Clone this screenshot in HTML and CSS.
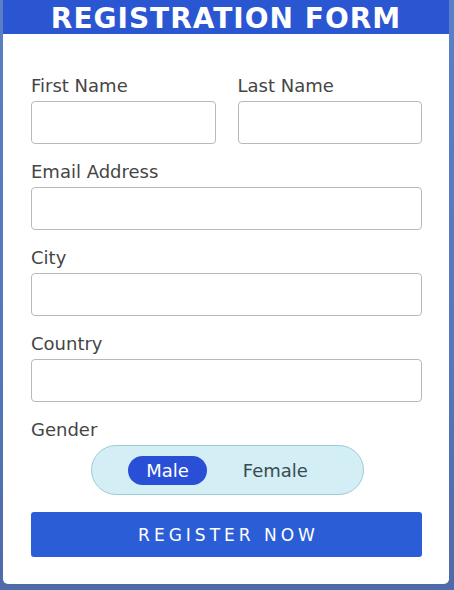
FILE: index.html
```html
<!DOCTYPE html>
<html lang="en">
<head>
<meta charset="utf-8">
<title>Registration Form</title>
<link rel="stylesheet" href="styles.css">
</head>
<body>
<div class="card">
  <h1 class="title">REGISTRATION FORM</h1>
  <form class="form">
    <div class="row">
      <div class="field">
        <label class="label">First Name</label>
        <input class="input" type="text">
      </div>
      <div class="field">
        <label class="label">Last Name</label>
        <input class="input" type="text">
      </div>
    </div>
    <div class="field">
      <label class="label">Email Address</label>
      <input class="input" type="text">
    </div>
    <div class="field">
      <label class="label">City</label>
      <input class="input" type="text">
    </div>
    <div class="field">
      <label class="label">Country</label>
      <input class="input" type="text">
    </div>
    <div class="gender">
      <span class="label">Gender</span>
      <div class="toggle">
        <span class="option active">Male</span>
        <span class="option">Female</span>
      </div>
    </div>
    <button class="submit" type="button">REGISTER NOW</button>
  </form>
</div>
</body>
</html>
```

FILE: styles.css
```css
html, body {
  margin: 0;
  padding: 0;
}
body {
  width: 454px;
  height: 590px;
  background: linear-gradient(180deg, #5a7fc6 0%, #5577bb 60%, #4e6aa8 100%);
  font-family: "DejaVu Sans", "Noto Sans", sans-serif;
  overflow: hidden;
}
.card {
  margin-left: 3px;
  width: 446px;
  height: 584px;
  background: #ffffff;
  border-radius: 0 0 5px 5px;
  box-sizing: border-box;
  display: flex;
  flex-direction: column;
}
.title {
  margin: 0;
  height: 34px;
  background: #2b56d2;
  color: #ffffff;
  font-size: 28px;
  font-weight: bold;
  letter-spacing: 1px;
  line-height: 38px;
  text-align: center;
  overflow: hidden;
}
.form {
  padding: 41px 27px 0 28px;
  display: flex;
  flex-direction: column;
}
.row {
  display: flex;
  gap: 22px;
}
.row .field {
  flex: 1 1 0;
  min-width: 0;
}
.field {
  display: flex;
  flex-direction: column;
  margin-bottom: 17px;
}
.label {
  font-size: 18px;
  line-height: 22px;
  color: #454545;
  margin-bottom: 4px;
  display: block;
}
.input {
  width: 100%;
  min-width: 0;
  height: 43px;
  box-sizing: border-box;
  border: 1px solid #b9b9b9;
  border-radius: 4px;
  background: #fff;
  margin: 0;
  padding: 0 10px;
  font-family: inherit;
  font-size: 16px;
}
.gender {
  display: flex;
  flex-direction: column;
}
.toggle {
  align-self: center;
  width: 273px;
  height: 50px;
  box-sizing: border-box;
  margin-left: 1px;
  border: 1px solid #9fcbd8;
  border-radius: 25px;
  background: #d3eef4;
  display: flex;
  align-items: center;
  justify-content: center;
  gap: 18px;
}
.option {
  font-size: 18px;
  line-height: 29px;
  height: 29px;
  padding: 0 18px;
  border-radius: 15px;
  color: #3a4a52;
}
.option.active {
  background: #2a4fd7;
  color: #ffffff;
}
.submit {
  margin-top: 17px;
  height: 45px;
  border: none;
  border-radius: 3px;
  background: #2b5ed6;
  color: #ffffff;
  font-family: inherit;
  font-size: 17px;
  letter-spacing: 4px;
  padding: 0 0 0 4px;
}
```
